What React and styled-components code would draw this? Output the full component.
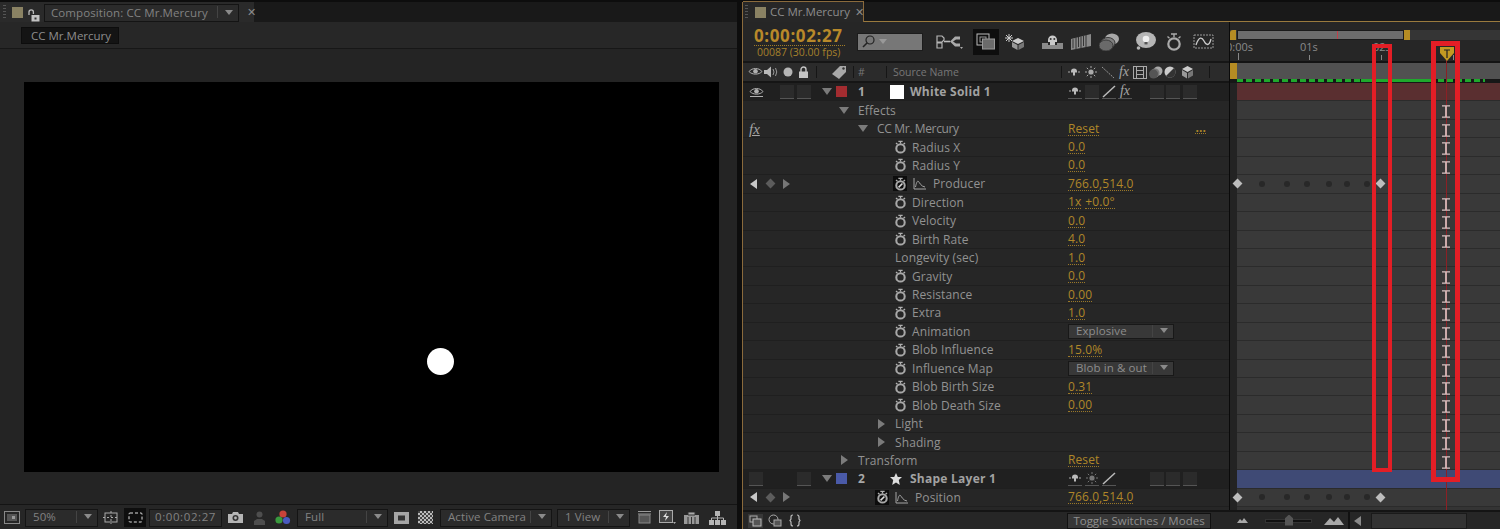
import styled, { createGlobalStyle } from 'styled-components';

const GlobalStyle = createGlobalStyle`
  html, body { margin: 0; padding: 0; background: #0d0d0d; }
  body { font-family: "Open Sans", "Liberation Sans", sans-serif; }
`;

const Screen = styled.div`
  display: flex;
  width: 1500px;
  height: 529px;
  overflow: hidden;
  padding-top: 2px;
  box-sizing: border-box;
  background: #0d0d0d;
  color: #929292;
  font-size: 12px;
`;

/* ---------- shared bits ---------- */

const TabBar = styled.div`
  display: flex;
  align-items: flex-end;
  height: 20px;
  flex: none;
  box-sizing: border-box;
  background: #191919;
`;

const Grip = styled.span`
  width: 3px;
  height: 14px;
  margin: 0 ${p => p.$mr || 5}px 3px ${p => p.$ml || 3}px;
  flex: none;
  background: repeating-linear-gradient(#555 0 1px, transparent 1px 3px);
`;

const Swatch = styled.span`
  width: 11px;
  height: 11px;
  flex: none;
  background: #8a8263;
  margin-bottom: 4px;
`;

const Caret = styled.span`
  width: 0;
  height: 0;
  flex: none;
  border-left: 4px solid transparent;
  border-right: 4px solid transparent;
  border-top: 5px solid ${p => p.$color || '#8a8a8a'};
`;

const Dropdown = styled.div`
  display: flex;
  align-items: center;
  justify-content: space-between;
  box-sizing: border-box;
  width: ${p => p.$w}px;
  margin-left: ${p => p.$ml || 0}px;
  height: 18px;
  flex: none;
  padding: 0 5px 2px ${p => p.$pl || 7}px;
  background: #2b2b2b;
  border: 1px solid #141414;
  color: #828282;
  font-size: 11.5px;
  letter-spacing: 0.1px;
  white-space: nowrap;
`;

const DropEnd = styled.span`
  display: flex;
  align-items: center;
  height: 12px;
  padding-left: 7px;
  border-left: 1px solid #444;
`;

const Icon = styled.svg`
  display: block;
  flex: none;
  margin-left: ${p => p.$ml || 0}px;
`;

const Glyph = ({ w = 14, h = 14, ml, vb, children }) => (
  <Icon $ml={ml} width={w} height={h} viewBox={vb || `0 0 ${w} ${h}`}>{children}</Icon>
);

const StopBox = styled.span`
  display: flex;
  align-items: center;
  justify-content: center;
  width: 14px;
  height: 15px;
  flex: none;
  background: ${p => (p.$active ? '#0c0c0c' : 'transparent')};
`;

const Stopwatch = ({ active }) => (
  <StopBox $active={active}>
    <svg width="13" height="14" viewBox="0 0 12 13">
      <path d="M4 1.200h4M6 1.200v2M1.800 2.800l1.400 1.200M10.200 2.800L8.800 4" stroke="#b0b0b0" strokeWidth="1.200" fill="none" />
      <circle cx="6" cy="7.800" r="3.900" stroke="#a8a8a8" strokeWidth="1.900" fill="none" />
      {active && <path d="M4.200 9.600L7.800 6" stroke="#ddd" strokeWidth="1.500" />}
    </svg>
  </StopBox>
);

const GraphIcon = ({ ml }) => (
  <Glyph w={13} h={13} ml={ml}>
    <path d="M1 1v11h12" stroke="#a5a5a5" strokeWidth="1" fill="none" />
    <path d="M2.500 10C3.500 5 4.500 3.500 5.500 4.500S8 9.500 12 10" stroke="#a5a5a5" strokeWidth="1" fill="none" />
  </Glyph>
);

/* ---------- composition panel ---------- */

const CompPanel = styled.section`
  display: flex;
  flex-direction: column;
  width: 737px;
  flex: none;
`;

const CompTab = styled.div`
  display: flex;
  align-items: flex-end;
  width: 254px;
  height: 20px;
  background: #2a2a2a;
`;

const LockIcon = () => (
  <Glyph w={13} h={13} ml={4}>
    <path d="M2 6V3a2.200 2.200 0 0 1 4.400 0v2" stroke="#bbb" strokeWidth="1.300" fill="none" />
    <rect x="4.500" y="6" width="8" height="6.500" fill="#c2c2c2" />
    <rect x="7.500" y="8.500" width="2" height="2" fill="#333" />
  </Glyph>
);

const CloseMark = styled.span`
  margin: 0 0 3px ${p => p.$ml || 8}px;
  font-size: 11px;
  line-height: 14px;
  color: #8a8a8a;
`;

const CompSubBar = styled.div`
  height: 27px;
  flex: none;
  display: flex;
  align-items: center;
  padding-left: 21px;
  box-sizing: border-box;
  background: #272727;
  border-bottom: 1px solid #171717;
`;

const CompButton = styled.div`
  width: 98px;
  height: 17px;
  line-height: 15px;
  box-sizing: border-box;
  padding-left: 9px;
  background: #141414;
  border: 1px solid #0d0d0d;
  color: #8d8d8d;
  font-size: 11.5px;
`;

const Viewer = styled.div`
  flex: 1;
  padding: 33px 18px 32px 24px;
  background: #242424;
  display: flex;
`;

const Canvas = styled.div`
  position: relative;
  flex: 1;
  background: #000;
`;

const Blob = styled.div`
  position: absolute;
  left: 403px;
  top: 266px;
  width: 27px;
  height: 27px;
  border-radius: 50%;
  background: #fff;
`;

const ViewerFooter = styled.div`
  display: flex;
  align-items: center;
  height: 25px;
  flex: none;
  box-sizing: border-box;
  padding: 1px 0 0 4px;
  background: #262626;
  border-top: 1px solid #141414;
`;

const SelectedBox = styled.span`
  display: flex;
  align-items: center;
  justify-content: center;
  width: ${p => p.$w || 22}px;
  height: ${p => p.$h || 19}px;
  flex: none;
  margin-left: ${p => p.$ml || 0}px;
  background: #0e0e0e;
`;

const TimeBox = styled(Dropdown)`
  justify-content: center;
  padding: 0 0 2px;
  letter-spacing: 0.6px;
`;

/* ---------- timeline panel ---------- */

const TimelinePanel = styled.section`
  display: flex;
  flex-direction: column;
  width: 758px;
  margin-left: 5px;
  flex: none;
  border-left: 1px solid #8a6a3c;
  box-sizing: border-box;
`;

const TimelineTabBar = styled(TabBar)`
  border-bottom: 1px solid #9a7a3e;
`;

const TimelineTab = styled.div`
  display: flex;
  align-items: flex-end;
  width: 121px;
  height: 21px;
  margin-bottom: -1px;
  background: #272727;
  border-top: 1px solid #8a6a3c;
  border-right: 1px solid #8a6a3c;
  box-sizing: border-box;
  color: #8d8d8d;
`;

const TabLabel = styled.span`
  margin: 0 0 3px 4px;
  font-size: 11.5px;
  white-space: nowrap;
`;

const TimelineBody = styled.div`
  position: relative;
  display: flex;
  flex: 1;
  min-height: 0;
`;

const LayerColumn = styled.div`
  width: 486px;
  flex: none;
  display: flex;
  flex-direction: column;
  background: #262626;
`;

const TopBar = styled.div`
  display: flex;
  align-items: center;
  height: 41px;
  flex: none;
  box-sizing: border-box;
  border-bottom: 2px solid #161616;
`;

const TimeBlock = styled.div`
  width: 114px;
  flex: none;
  padding-left: 11px;
  box-sizing: border-box;
  color: #b8892a;
`;

const TimeCode = styled.div`
  font-size: 17px;
  font-weight: 700;
  line-height: 19px;
  letter-spacing: 0.6px;
  border-bottom: 1px dotted #a07c28;
  width: 91px;
`;

const Frames = styled.div`
  font-size: 10.5px;
  line-height: 12px;
  color: #a5802c;
  padding-left: 3px;
  white-space: nowrap;
`;

const SearchBox = styled.div`
  display: flex;
  align-items: center;
  gap: 4px;
  width: 66px;
  height: 18px;
  flex: none;
  padding-left: 4px;
  box-sizing: border-box;
  background: #777;
  border: 1px solid #1c1c1c;
`;

const ColumnHeader = styled.div`
  display: flex;
  align-items: center;
  height: 20px;
  flex: none;
  box-sizing: border-box;
  background: #2b2b2b;
  border-bottom: 2px solid #151515;
  color: #777;
  font-size: 10.5px;
`;

const Slot = styled.span`
  display: flex;
  align-items: center;
  justify-content: ${p => p.$align || 'center'};
  width: ${p => p.$w}px;
  flex: none;
  margin-left: ${p => p.$ml || 0}px;
  white-space: nowrap;
`;

const Tick = styled.span`
  width: 1px;
  height: 12px;
  flex: none;
  background: #161616;
  margin-left: ${p => p.$ml || 0}px;
`;

const Fx = styled.span`
  font-family: "Liberation Serif", serif;
  font-style: italic;
  font-size: ${p => p.$size || 14}px;
  color: #a5a5a5;
  line-height: 14px;
  text-decoration: ${p => (p.$under ? 'underline' : 'none')};
`;

const Row = styled.div`
  display: flex;
  align-items: center;
  height: 18.45px;
  flex: none;
  box-sizing: border-box;
  border-bottom: 1px solid #1f1f1f;
  background: ${p => (p.$layer ? '#202020' : '#262626')};
  white-space: nowrap;
`;

const NavArea = styled.div`
  display: flex;
  align-items: center;
  width: ${p => p.$w || 92}px;
  height: 100%;
  flex: none;
  padding-left: 6px;
  box-sizing: border-box;
`;

const Tree = styled.div`
  display: flex;
  align-items: center;
  width: 233px;
  flex: none;
  padding-left: ${p => p.$indent}px;
  box-sizing: border-box;
  letter-spacing: 0.1px;
`;

const Twirl = styled.span`
  display: flex;
  align-items: center;
  justify-content: flex-start;
  width: ${p => p.$w || 20}px;
  margin-left: ${p => p.$ml || 0}px;
  flex: none;
  &::before {
    content: '';
    margin-left: 1px;
    ${p => (p.$open
    ? 'border-left: 5px solid transparent; border-right: 5px solid transparent; border-top: 7px solid #7b7b7b;'
    : 'margin-left: 3px; border-top: 5px solid transparent; border-bottom: 5px solid transparent; border-left: 7px solid #7b7b7b;')}
  }
`;

const PropLabel = styled.span`
  margin-left: ${p => p.$ml || 0}px;
  letter-spacing: ${p => p.$ls || 0.1}px;
`;

const ValueArea = styled.div`
  display: flex;
  align-items: center;
  flex: 1;
  padding-right: 23px;
  color: #b08629;
  letter-spacing: 0.1px;
`;

const Scrub = styled.span`
  border-bottom: 1px dotted #9a7828;
  line-height: 13px;
  margin-right: ${p => p.$mr || 0}px;
`;

const Ellipsis = styled.span`
  margin-left: auto;
  font-weight: 700;
  line-height: 10px;
  border-bottom: 1px dotted #9a7828;
`;

const PropSelect = styled(Dropdown)`
  width: 106px;
  height: 15px;
  font-size: 11.5px;
  color: #8d8d8d;
  background: #383838;
  padding: 0 5px 1px 7px;
  border-color: #181818;
`;

const LayerName = styled.span`
  width: 158px;
  flex: none;
  font-weight: 700;
  color: #a2a2a2;
  letter-spacing: 0.25px;
`;

const LayerIndex = styled.span`
  width: 32px;
  flex: none;
  margin-left: 11px;
  font-weight: 700;
  color: #a8a8a8;
`;

const LabelChip = styled.span`
  width: ${p => p.$size || 11}px;
  height: ${p => p.$size || 11}px;
  flex: none;
  background: ${p => p.$color};
`;

const ToggleBox = styled.span`
  display: block;
  width: 14px;
  height: 14px;
  flex: none;
  margin-left: ${p => p.$ml || 0}px;
  box-sizing: border-box;
  background: #2b2b2b;
  border-bottom: 1px solid #555;
`;

const SwitchCell = styled.span`
  display: flex;
  justify-content: center;
  align-items: center;
  width: 14px;
  height: 14px;
  flex: none;
  margin-left: ${p => p.$ml || 0}px;
  border-bottom: 1px solid #555;
  box-sizing: border-box;
`;

/* tracks */

const TrackColumn = styled.div`
  flex: 1;
  display: flex;
  flex-direction: column;
  border-left: 1px solid #0a0a0a;
  background: #242424;
`;

const Ruler = styled.div`
  position: relative;
  height: 41px;
  flex: none;
  box-sizing: border-box;
  padding-top: 8px;
  overflow: hidden;
  background: #262626;
  border-bottom: 2px solid #141414;
`;

const NavBar = styled.div`
  display: flex;
  align-items: center;
  height: 10px;
  background: #353535;
`;

const NavActive = styled.div`
  position: relative;
  width: 167px;
  height: 100%;
  margin-left: 1px;
  background: #6d6d6d;
  border: 1px solid #1b1b1b;
  box-sizing: border-box;
  &::after {
    content: '';
    position: absolute;
    left: 99px;
    top: 0;
    bottom: 0;
    width: 1px;
    background: #c0404a;
  }
`;

const Handle = styled.span`
  display: block;
  width: ${p => p.$w || 6}px;
  height: ${p => p.$h || 10}px;
  flex: none;
  background: #b58c23;
  border-radius: ${p => (p.$rounded ? '3px 0 0 0' : 0)};
`;

const RulerLabels = styled.div`
  position: relative;
  font-size: 11px;
  color: #8a8a8a;
`;

const RulerLabel = styled.span`
  position: absolute;
  left: ${p => p.$at}px;
  top: 0;
  line-height: 14px;
`;

const RulerTick = styled.span`
  position: absolute;
  left: ${p => p.$at}px;
  bottom: 1px;
  width: 1px;
  height: ${p => p.$h || 5}px;
  background: #888;
`;

const WorkRow = styled.div`
  height: 20px;
  flex: none;
  box-sizing: border-box;
  background: #171717;
`;

const WorkBar = styled.div`
  display: flex;
  height: 16px;
  background: #515151;
`;

const CacheLine = styled.div`
  display: flex;
  margin-left: 7px;
  height: 3px;
`;

const CacheRun = styled.span`
  width: ${p => p.$w}px;
  flex: none;
  background: ${p => (p.$dashed
    ? 'repeating-linear-gradient(90deg, #1fa92c 0 6px, transparent 6px 9px)'
    : '#1fa92c')};
`;

const Track = styled.div`
  position: relative;
  height: 18.45px;
  flex: none;
  box-sizing: border-box;
  margin-left: 7px;
  background: ${p => p.$bg || '#393939'};
  border-bottom: 1px solid #2b2b2b;
`;

const TrackFill = styled.div`
  flex: 1;
  margin-left: 7px;
  background: #343434;
`;

const Gutter = styled.div`
  display: flex;
  flex-direction: column;
  flex: 1;
  background: #232323;
`;

const Key = styled.span`
  position: absolute;
  left: ${p => p.$at - 4}px;
  top: 5px;
  width: 7px;
  height: 7px;
  background: #bdbdbd;
  transform: rotate(45deg);
`;

const KeyDot = styled.span`
  position: absolute;
  left: ${p => p.$at - 3}px;
  top: 5.500px;
  width: 6px;
  height: 6px;
  border-radius: 50%;
  background: #282828;
`;

const Beam = styled.svg`
  position: absolute;
  left: 205px;
  top: 4px;
  z-index: 2;
`;

const Playhead = styled.span`
  position: absolute;
  left: 703px;
  top: 34px;
  bottom: 0;
  width: 1px;
  background: #8c2025;
  z-index: 1;
`;

const HeadCap = styled.svg`
  position: absolute;
  left: 697px;
  top: 25px;
  z-index: 2;
`;

const Annotation = styled.span`
  position: absolute;
  left: ${p => p.$x}px;
  top: ${p => p.$y}px;
  width: ${p => p.$w}px;
  height: ${p => p.$h}px;
  box-sizing: border-box;
  border: ${p => p.$b}px solid #e31e26;
  z-index: 3;
`;

const TimelineFooter = styled.div`
  display: flex;
  align-items: center;
  height: 19px;
  flex: none;
  box-sizing: border-box;
  background: #262626;
  border-top: 2px solid #141414;
  padding-left: 5px;
`;

const ToggleButton = styled.div`
  width: 144px;
  height: 16px;
  line-height: 14px;
  margin-left: 266px;
  flex: none;
  text-align: center;
  box-sizing: border-box;
  background: #373737;
  border: 1px solid #111;
  color: #8f8f8f;
  font-size: 11.5px;
`;

const ZoomSlider = styled.div`
  position: relative;
  width: 47px;
  height: 4px;
  margin-left: 17px;
  flex: none;
  background: #111;
  border: 1px solid #333;
  box-sizing: border-box;
  &::after {
    content: '';
    position: absolute;
    left: 19px;
    top: -5px;
    width: 8px;
    height: 11px;
    background: #555;
    clip-path: polygon(50% 0, 100% 35%, 100% 100%, 0 100%, 0 35%);
  }
`;

const ScrollTrack = styled.div`
  width: 96px;
  height: 16px;
  margin-left: 10px;
  flex: none;
  background: #333;
  border: 1px solid #1a1a1a;
  box-sizing: border-box;
`;

const FooterRule = styled.span`
  width: 2px;
  height: 17px;
  flex: none;
  margin-left: 4px;
  background: #111;
`;

const Triangle = styled.span`
  width: 0;
  height: 0;
  flex: none;
  margin-left: ${p => p.$ml || 0}px;
  border-top: ${p => p.$size || 5}px solid transparent;
  border-bottom: ${p => p.$size || 5}px solid transparent;
  ${p => (p.$right ? 'border-left' : 'border-right')}: ${p => (p.$size || 5) + 2}px solid ${p => p.$color || '#8a8a8a'};
`;

const Diamond = styled.span`
  width: 7px;
  height: 7px;
  flex: none;
  margin-left: ${p => p.$ml || 0}px;
  background: #5c5c5c;
  transform: rotate(45deg);
`;

/* ---------- small drawings ---------- */

const Eye = ({ under }) => (
  <Glyph w={15} h={12}>
    <path d="M1 5.500C4 1.500 11 1.500 14 5.500 11 9 4 9 1 5.500z" stroke="#b0b0b0" fill="none" />
    <circle cx="7.500" cy="5.200" r="2.300" fill="#b0b0b0" />
    {under && <path d="M1 10.500h13" stroke="#b0b0b0" />}
  </Glyph>
);

const Speaker = () => (
  <Glyph w={16} h={12}>
    <path d="M1 4h3l4-3.500v11L4 8H1z" fill="#b8b8b8" />
    <path d="M10 3q2 3 0 6M12.500 2q2.500 4 0 8" stroke="#999" fill="none" />
  </Glyph>
);

const Solo = () => (
  <Glyph w={10} h={10}>
    <circle cx="5" cy="5" r="4.500" fill="#b5b5b5" />
  </Glyph>
);

const Lock = () => (
  <Glyph w={11} h={12}>
    <path d="M3 6V3.500a2.500 2.500 0 0 1 5 0V6" stroke="#c4c4c4" strokeWidth="1.400" fill="none" />
    <rect x="1" y="5.500" width="9" height="6.500" fill="#c4c4c4" />
  </Glyph>
);

const Tag = () => (
  <Glyph w={17} h={14}>
    <path d="M1 9l8-8h6v6l-7 7z" fill="#a8a8a8" />
    <circle cx="12.500" cy="3.500" r="1.200" fill="#333" />
  </Glyph>
);

const Shy = ({ under }) => (
  <Glyph w={12} h={9}>
    <path d="M0 4h2M10 4h2" stroke="#aaa" />
    <path d="M3 3.500a3 3 0 0 1 6 0v1H7v3H5v-3H3z" fill="#bbb" />
    {under && <path d="M0 8.500h12" stroke="#999" />}
  </Glyph>
);

const Sun = ({ dim }) => (
  <Glyph w={12} h={12}>
    <circle cx="6" cy="6" r="2.600" fill={dim ? '#777' : '#aaa'} />
    <path d="M6 0v2M6 10v2M0 6h2M10 6h2M1.800 1.800l1.400 1.400M8.800 8.800l1.400 1.400M1.800 10.200l1.400-1.400M8.800 3.200l1.400-1.400" stroke={dim ? '#777' : '#aaa'} />
  </Glyph>
);

const Slash = ({ bright }) => (
  <Glyph w={14} h={13}>
    <path d={bright ? 'M1 12L13 1' : 'M1 1l12 11'} stroke={bright ? '#bbb' : '#999'} strokeWidth={bright ? 1.500 : 1} strokeDasharray={bright ? 'none' : '2 1'} />
  </Glyph>
);

const FilmCol = () => (
  <Glyph w={14} h={13}>
    <rect x="0.500" y="0.500" width="13" height="12" fill="none" stroke="#aaa" />
    <path d="M3.500 1v11M10.500 1v11M4 4.500h6M4 8.500h6" stroke="#aaa" />
  </Glyph>
);

const BlurCol = () => (
  <Glyph w={14} h={13}>
    <circle cx="9" cy="5" r="4.500" fill="#aaa" />
    <circle cx="6" cy="7" r="4.500" fill="#777" />
    <circle cx="4.500" cy="8" r="4.500" fill="#555" />
  </Glyph>
);

const HalfCol = () => (
  <Glyph w={12} h={12}>
    <circle cx="6" cy="6" r="5.500" fill="#ccc" />
    <path d="M10 2A5.500 5.500 0 0 1 2 10z" fill="#333" />
  </Glyph>
);

const Cube = () => (
  <Glyph w={13} h={14}>
    <path d="M6.500 1l5.500 3-5.500 3L1 4z" fill="#ccc" />
    <path d="M1 5l5 3v5.500l-5-3z" fill="#999" />
    <path d="M12 5l-5 3v5.500l5-3z" fill="#777" />
  </Glyph>
);

const Search = () => (
  <>
    <Glyph w={13} h={13}>
      <circle cx="8" cy="5" r="4" stroke="#222" strokeWidth="1.200" fill="none" />
      <path d="M5 8l-4 4" stroke="#222" strokeWidth="1.600" />
    </Glyph>
    <Caret $color="#999" />
  </>
);

const CompFlow = () => (
  <Glyph w={28} h={16} ml={13}>
    <path d="M1 2h5l2 2v2l-2 2H1zM1 9h5v5H1z" fill="none" stroke="#b5b5b5" strokeWidth="1.200" />
    <path d="M8 7.500h6" stroke="#bbb" strokeWidth="1.600" />
    <path d="M14 7.500l5-5h5v3h-4l-3 2 3 2h4v3h-5z" fill="#aaa" />
    <path d="M24 13h3l-1.500 2z" fill="#aaa" />
  </Glyph>
);

const MiniFlow = () => (
  <SelectedBox $ml={9} $w={26} $h={26}>
    <Glyph w={20} h={18}>
      <rect x="1" y="1" width="12" height="11" fill="none" stroke="#bbb" />
      <rect x="4" y="4" width="6" height="5" fill="none" stroke="#999" />
      <rect x="6.500" y="6" width="12" height="10" fill="#6b6b6b" stroke="#999" />
    </Glyph>
  </SelectedBox>
);

const Draft3d = () => (
  <Glyph w={21} h={17} ml={5}>
    <path d="M5 1v8M1 5h8M2 2l6 6M8 2L2 8" stroke="#ccc" />
    <path d="M14 5l6 3-6 3-6-3z" fill="#ccc" />
    <path d="M8 9l5.500 3v5L8 14z" fill="#999" />
    <path d="M20 9l-5.500 3v5l5.500-3z" fill="#777" />
  </Glyph>
);

const ShyMan = () => (
  <Glyph w={21} h={15} ml={17}>
    <path d="M6 6a4.500 4.500 0 0 1 9 0v2h-2v3H8V8H6z" fill="#c9c9c9" />
    <circle cx="8.700" cy="5" r="1" fill="#333" />
    <circle cx="12.300" cy="5" r="1" fill="#333" />
    <path d="M0 9h6v2h9V9h6v6H0z" fill="#8a8a8a" />
  </Glyph>
);

const Film = () => (
  <Glyph w={20} h={16} ml={8}>
    <path d="M0 5l20-5v12L0 16z" fill="#8a8a8a" />
    <path d="M5 3.500v12M10 2.500v12M15 1v12M2 5.200v9M7.500 3v10M12.500 2v10" stroke="#333" />
  </Glyph>
);

const Blur = () => (
  <Glyph w={20} h={18} ml={8}>
    <ellipse cx="13" cy="6" rx="7" ry="5.500" fill="#a8a8a8" />
    <ellipse cx="9" cy="10" rx="7" ry="5.500" fill="#808080" stroke="#3a3a3a" />
    <ellipse cx="7" cy="12.500" rx="7" ry="5.500" fill="#6a6a6a" stroke="#3a3a3a" />
  </Glyph>
);

const Brain = () => (
  <Glyph w={21} h={20} ml={16}>
    <ellipse cx="11" cy="8" rx="10" ry="8" fill="#b5b5b5" />
    <circle cx="3.500" cy="16" r="1.800" fill="#b5b5b5" />
    <circle cx="11" cy="7" r="3.300" fill="#eee" />
    <rect x="9.500" y="10" width="3" height="2.400" fill="#555" />
  </Glyph>
);

const AutoKey = () => (
  <Glyph w={18} h={18} ml={9}>
    <path d="M6 1h6M9 1v3M2.500 3.500l2 1.700M15.500 3.500l-2 1.700" stroke="#aaa" strokeWidth="1.400" />
    <circle cx="9" cy="11" r="5.700" stroke="#aaa" strokeWidth="2.200" fill="none" />
  </Glyph>
);

const GraphEditor = () => (
  <Glyph w={21} h={16} ml={10}>
    <rect x="1" y="1" width="19" height="13" fill="none" stroke="#999" strokeDasharray="2 1" />
    <path d="M3 11C6 2 9 3 11 7s5 6 7-2" stroke="#ccc" strokeWidth="1.300" fill="none" />
  </Glyph>
);

const Mountains = ({ big, ml }) => (
  <Glyph w={big ? 20 : 11} h={big ? 8 : 5} ml={ml}>
    <path d={big ? 'M0 8l6-7 4 4 4-5 6 8z' : 'M0 5l3-4 2 2 2-3 4 5z'} fill="#a8a8a8" />
  </Glyph>
);

const Checker = () => (
  <Glyph w={15} h={13} ml={9}>
    <defs>
      <pattern id="alpha-grid" width="4" height="4" patternUnits="userSpaceOnUse">
        <rect width="4" height="4" fill="#bbb" />
        <rect width="2" height="2" fill="#444" />
        <rect x="2" y="2" width="2" height="2" fill="#444" />
      </pattern>
    </defs>
    <rect width="15" height="13" fill="url(#alpha-grid)" />
  </Glyph>
);

/* ---------- data ---------- */

const OPEN_ROWS = [
  { kind: 'group', name: 'Effects', indent: 3, open: true, beam: true },
  { kind: 'group', name: 'CC Mr. Mercury', indent: 22, open: true, reset: true, fx: true, beam: true, ls: -0.35 },
  { name: 'Radius X', values: ['0.0'], beam: true },
  { name: 'Radius Y', values: ['0.0'], beam: true },
  { name: 'Producer', values: ['766.0', '514.0'], keyed: true, indent: 58, labelGap: 7 },
  { name: 'Direction', values: ['1x', '+0.0°'], beam: true },
  { name: 'Velocity', values: ['0.0'], beam: true },
  { name: 'Birth Rate', values: ['4.0'], beam: true },
  { name: 'Longevity (sec)', values: ['1.0'], noWatch: true },
  { name: 'Gravity', values: ['0.0'], beam: true },
  { name: 'Resistance', values: ['0.00'], beam: true },
  { name: 'Extra', values: ['1.0'], beam: true },
  { name: 'Animation', select: 'Explosive', beam: true },
  { name: 'Blob Influence', values: ['15.0%'], beam: true },
  { name: 'Influence Map', select: 'Blob in & out', beam: true },
  { name: 'Blob Birth Size', values: ['0.31'], beam: true },
  { name: 'Blob Death Size', values: ['0.00'], beam: true },
  { kind: 'group', name: 'Light', indent: 40, beam: true },
  { kind: 'group', name: 'Shading', indent: 40, beam: true },
  { kind: 'group', name: 'Transform', indent: 3, reset: true, beam: true },
];

const POSITION_ROW = { name: 'Position', values: ['766.0', '514.0'], keyed: true, indent: 40, labelGap: 7 };

const DOTS = [25, 50, 70, 92, 110, 130];

const KeyNav = () => (
  <>
    <Triangle $ml={1} $color="#c8c8c8" />
    <Diamond $ml={10} />
    <Triangle $right $ml={9} $color="#777" />
  </>
);

const Keyframes = () => (
  <>
    <Key $at={1} />
    {DOTS.map(d => <KeyDot key={d} $at={d} />)}
    <Key $at={144} />
  </>
);

const IBeam = () => (
  <Beam width="8" height="13" viewBox="0 0 8 13">
    <path d="M0 .8h8M0 12.200h8" stroke="#d9c2c2" strokeWidth="1.300" />
    <path d="M4 1v11" stroke="#d9b8b8" strokeWidth="1.800" />
  </Beam>
);

function ValueCell({ row }) {
  if (row.reset) {
    return (
      <ValueArea>
        <Scrub>Reset</Scrub>
        {row.fx && <Ellipsis>...</Ellipsis>}
      </ValueArea>
    );
  }
  if (row.select) {
    return (
      <ValueArea>
        <PropSelect $w={106}>{row.select}<DropEnd><Caret /></DropEnd></PropSelect>
      </ValueArea>
    );
  }
  if (!row.values) return <ValueArea />;
  const [first, second] = row.values;
  return (
    <ValueArea>
      <Scrub $mr={first === '1x' ? 4 : 0}>{first}</Scrub>
      {second && first !== '1x' && ','}
      {second && <Scrub>{second}</Scrub>}
    </ValueArea>
  );
}

function PropertyRow({ row }) {
  let tree;
  if (row.kind === 'group') {
    tree = (
      <Tree $indent={row.indent}>
        <Twirl $open={row.open} />
        <PropLabel $ls={row.ls}>{row.name}</PropLabel>
      </Tree>
    );
  } else if (row.noWatch) {
    tree = <Tree $indent={60}>{row.name}</Tree>;
  } else if (row.keyed) {
    tree = (
      <Tree $indent={row.indent}>
        <Stopwatch active />
        <GraphIcon ml={6} />
        <PropLabel $ml={row.labelGap}>{row.name}</PropLabel>
      </Tree>
    );
  } else {
    tree = (
      <Tree $indent={58}>
        <Stopwatch />
        <PropLabel $ml={5}>{row.name}</PropLabel>
      </Tree>
    );
  }
  return (
    <Row>
      <NavArea>
        {row.keyed && <KeyNav />}
        {row.fx && <Fx $under $size={15}>fx</Fx>}
      </NavArea>
      {tree}
      <ValueCell row={row} />
    </Row>
  );
}

const TrailingBoxes = () => (
  <>
    <ToggleBox $ml={18} />
    <ToggleBox $ml={2} />
    <ToggleBox $ml={3} />
  </>
);

const CompFooter = () => (
  <ViewerFooter>
    <Glyph w={16} h={13}>
      <rect x="0.500" y="0.500" width="15" height="12" fill="none" stroke="#888" />
      <rect x="3" y="3" width="10" height="7" fill="#555" />
      <rect x="8" y="5" width="3" height="3" fill="#999" />
    </Glyph>
    <Dropdown $w={73} $ml={5}>50%<DropEnd><Caret /></DropEnd></Dropdown>
    <Glyph w={16} h={15} ml={5}>
      <rect x="2" y="3" width="12" height="9" fill="none" stroke="#aaa" />
      <path d="M0 7.500h16M8 1v13" stroke="#aaa" strokeDasharray="2 2" />
    </Glyph>
    <SelectedBox $ml={5}>
      <Glyph w={15} h={11}>
        <rect x="1" y="1" width="13" height="9" rx="1" fill="none" stroke="#ddd" strokeDasharray="3 2" />
      </Glyph>
    </SelectedBox>
    <TimeBox $w={73} $ml={3}>0:00:02:27</TimeBox>
    <Glyph w={15} h={11} ml={6}>
      <path d="M0 2h4l1-2h5l1 2h4v9H0z" fill="#b5b5b5" />
      <circle cx="7.500" cy="6" r="3" fill="#333" />
      <circle cx="7.500" cy="6" r="1.400" fill="#b5b5b5" />
    </Glyph>
    <Glyph w={13} h={14} ml={10}>
      <circle cx="6.500" cy="3.500" r="3" fill="#4e4e4e" />
      <path d="M1 14v-4l3-2h5l3 2v4z" fill="#4e4e4e" />
    </Glyph>
    <Glyph w={16} h={15} ml={9}>
      <circle cx="8" cy="4" r="3.600" fill="#c8433a" />
      <circle cx="4" cy="10" r="3.600" fill="#3a9a3e" />
      <circle cx="11.500" cy="10.500" r="3.600" fill="#4a5ac0" />
    </Glyph>
    <Dropdown $w={91} $ml={6}>Full<DropEnd><Caret /></DropEnd></Dropdown>
    <Glyph w={15} h={12} ml={6}>
      <rect x="0" y="0" width="15" height="12" fill="#a5a5a5" />
      <rect x="4" y="3.500" width="7" height="5" fill="#333" />
    </Glyph>
    <Checker />
    <Dropdown $w={112} $ml={7}>Active Camera<DropEnd><Caret /></DropEnd></Dropdown>
    <Dropdown $w={73} $ml={5}>1 View<DropEnd><Caret /></DropEnd></Dropdown>
    <Glyph w={13} h={13} ml={8}>
      <path d="M0 .5h13M0 3h13" stroke="#999" />
      <rect x="1" y="4" width="11" height="8" fill="#555" stroke="#888" />
    </Glyph>
    <Glyph w={17} h={15} ml={8}>
      <rect x="0.500" y="0.500" width="13" height="12" fill="#444" stroke="#aaa" />
      <path d="M8 2L4 7h3l-1 4 4-5H7z" fill="#ddd" />
      <path d="M14 12h3l-1.500 2z" fill="#aaa" />
    </Glyph>
    <Glyph w={15} h={12} ml={8}>
      <path d="M0 3h15v9H0z" fill="#999" />
      <path d="M4 0h7v3H4zM4 5v7M7.500 5v7M11 5v7" fill="#aaa" stroke="#333" />
    </Glyph>
    <Glyph w={17} h={14} ml={10}>
      <rect x="6" y="0" width="5" height="5" fill="#b5b5b5" />
      <rect x="0" y="9" width="5" height="5" fill="#b5b5b5" />
      <rect x="6" y="9" width="5" height="5" fill="#b5b5b5" />
      <rect x="12" y="9" width="5" height="5" fill="#b5b5b5" />
      <path d="M2.500 9V7h12v2M8.500 5v4" stroke="#b5b5b5" fill="none" />
    </Glyph>
  </ViewerFooter>
);

export default function App() {
  return (
    <>
      <GlobalStyle />
      <Screen>
        <CompPanel>
          <TabBar>
            <CompTab>
              <Grip $ml={3} $mr={6} />
              <Swatch />
              <LockIcon />
              <Dropdown $w={195} $ml={4} $pl={6}>
                Composition: CC Mr.Mercury
                <DropEnd><Caret /></DropEnd>
              </Dropdown>
              <CloseMark>✕</CloseMark>
            </CompTab>
          </TabBar>
          <CompSubBar>
            <CompButton>CC Mr.Mercury</CompButton>
          </CompSubBar>
          <Viewer>
            <Canvas>
              <Blob />
            </Canvas>
          </Viewer>
          <CompFooter />
        </CompPanel>

        <TimelinePanel>
          <TimelineTabBar>
            <TimelineTab>
              <Grip $ml={2} $mr={7} />
              <Swatch />
              <TabLabel>CC Mr.Mercury</TabLabel>
              <CloseMark $ml={5}>✕</CloseMark>
            </TimelineTab>
          </TimelineTabBar>

          <TimelineBody>
            <LayerColumn>
              <TopBar>
                <TimeBlock>
                  <TimeCode>0:00:02:27</TimeCode>
                  <Frames>00087 (30.00 fps)</Frames>
                </TimeBlock>
                <SearchBox><Search /></SearchBox>
                <CompFlow />
                <MiniFlow />
                <Draft3d />
                <ShyMan />
                <Film />
                <Blur />
                <Brain />
                <AutoKey />
                <GraphEditor />
              </TopBar>

              <ColumnHeader>
                <Slot $w={15} $ml={5}><Eye /></Slot>
                <Slot $w={16}><Speaker /></Slot>
                <Slot $w={17}><Solo /></Slot>
                <Slot $w={15}><Lock /></Slot>
                <Tick $ml={5} />
                <Slot $w={21} $ml={12}><Tag /></Slot>
                <Tick $ml={3} />
                <Slot $w={28} $ml={4} $align="flex-start">#</Slot>
                <Tick />
                <Slot $w={168} $ml={6} $align="flex-start">Source Name</Slot>
                <Tick />
                <Slot $w={14} $ml={5}><Shy /></Slot>
                <Slot $w={14} $ml={3}><Sun /></Slot>
                <Slot $w={14} $ml={3}><Slash /></Slot>
                <Slot $w={14} $ml={2}><Fx>fx</Fx></Slot>
                <Slot $w={15} $ml={1}><FilmCol /></Slot>
                <Slot $w={15} $ml={1}><BlurCol /></Slot>
                <Slot $w={14}><HalfCol /></Slot>
                <Slot $w={14} $ml={3}><Cube /></Slot>
                <Tick $ml={15} />
              </ColumnHeader>

              <Row $layer>
                <NavArea $w={93}>
                  <Eye under />
                  <ToggleBox $ml={16} />
                  <ToggleBox $ml={3} />
                  <Twirl $open $w={14} $ml={10} />
                </NavArea>
                <LabelChip $color="#a32c30" />
                <LayerIndex>1</LayerIndex>
                <Slot $w={20} $align="flex-start">
                  <LabelChip $color="#fff" $size={14} />
                </Slot>
                <LayerName>White Solid 1</LayerName>
                <SwitchCell><Shy /></SwitchCell>
                <ToggleBox $ml={3} />
                <SwitchCell $ml={3}><Slash bright /></SwitchCell>
                <SwitchCell $ml={2}><Fx>fx</Fx></SwitchCell>
                <TrailingBoxes />
              </Row>

              {OPEN_ROWS.map(row => <PropertyRow key={row.name} row={row} />)}

              <Row $layer>
                <NavArea $w={93}>
                  <ToggleBox />
                  <ToggleBox $ml={34} />
                  <Twirl $open $w={14} $ml={10} />
                </NavArea>
                <LabelChip $color="#4a5aa8" />
                <LayerIndex>2</LayerIndex>
                <Slot $w={20} $align="flex-start">
                  <Glyph w={12} h={12}>
                    <path d="M6 0l1.800 4H12L8.800 7l1 5L6 9.500 2.200 12l1-5L0 4h4.200z" fill="#ddd" />
                  </Glyph>
                </Slot>
                <LayerName>Shape Layer 1</LayerName>
                <SwitchCell><Shy /></SwitchCell>
                <SwitchCell $ml={3}><Sun dim /></SwitchCell>
                <SwitchCell $ml={3}><Slash bright /></SwitchCell>
                <Slot $w={14} $ml={2} />
                <TrailingBoxes />
              </Row>

              <PropertyRow row={POSITION_ROW} />
            </LayerColumn>

            <TrackColumn>
              <Ruler>
                <NavBar>
                  <Handle $rounded />
                  <NavActive />
                  <Handle />
                </NavBar>
                <RulerLabels>
                  <RulerLabel $at={-4}>0:00s</RulerLabel>
                  <RulerLabel $at={70}>01s</RulerLabel>
                  <RulerLabel $at={143}>02s</RulerLabel>
                </RulerLabels>
                <RulerTick $at={8} $h={7} />
                <RulerTick $at={79} />
                <RulerTick $at={151} />
                <RulerTick $at={223} />
              </Ruler>
              <WorkRow>
                <WorkBar>
                  <Handle $w={7} $h={16} />
                </WorkBar>
                <CacheLine>
                  <CacheRun $w={124} $dashed />
                  <CacheRun $w={68} />
                  <CacheRun $w={56} $dashed />
                </CacheLine>
              </WorkRow>
              <Gutter>
                <Track $bg="#5a2f30" />
                {OPEN_ROWS.map(row => (
                  <Track key={row.name}>
                    {row.beam && <IBeam />}
                    {row.keyed && <Keyframes />}
                  </Track>
                ))}
                <Track $bg="#3f4a75" />
                <Track><Keyframes /></Track>
                <TrackFill />
              </Gutter>
            </TrackColumn>

            <Playhead />
            <HeadCap width="14" height="14" viewBox="0 0 14 14">
              <path d="M0 0h14v6l-7 8-7-8z" fill="#c39a22" />
              <path d="M4 3h6M7 3v8" stroke="#222" strokeWidth="1.200" />
            </HeadCap>
            <Annotation $x={629} $y={22} $w={20} $h={428} $b={4} />
            <Annotation $x={688} $y={19} $w={29} $h={441} $b={5} />
          </TimelineBody>

          <TimelineFooter>
            <Glyph w={15} h={14}>
              <rect x="0" y="0" width="15" height="14" fill="#383838" />
              <rect x="2" y="2" width="7" height="6" fill="none" stroke="#aaa" />
              <rect x="5" y="5" width="8" height="7" fill="#555" stroke="#bbb" />
            </Glyph>
            <Glyph w={14} h={13} ml={5}>
              <circle cx="5.500" cy="5.500" r="4.500" fill="none" stroke="#aaa" />
              <rect x="6" y="6" width="7" height="6" fill="#555" stroke="#aaa" />
            </Glyph>
            <Glyph w={12} h={13} ml={7}>
              <path d="M4 1Q2 1 2 3v2L1 6.500l1 1.500v2q0 2 2 2M8 1q2 0 2 2v2l1 1.500L10 8v2q0 2-2 2" stroke="#bbb" strokeWidth="1.200" fill="none" />
            </Glyph>
            <ToggleButton>Toggle Switches / Modes</ToggleButton>
            <Mountains ml={26} />
            <ZoomSlider />
            <Mountains big ml={12} />
            <FooterRule />
            <Triangle $ml={4} />
            <ScrollTrack />
          </TimelineFooter>
        </TimelinePanel>
      </Screen>
    </>
  );
}
